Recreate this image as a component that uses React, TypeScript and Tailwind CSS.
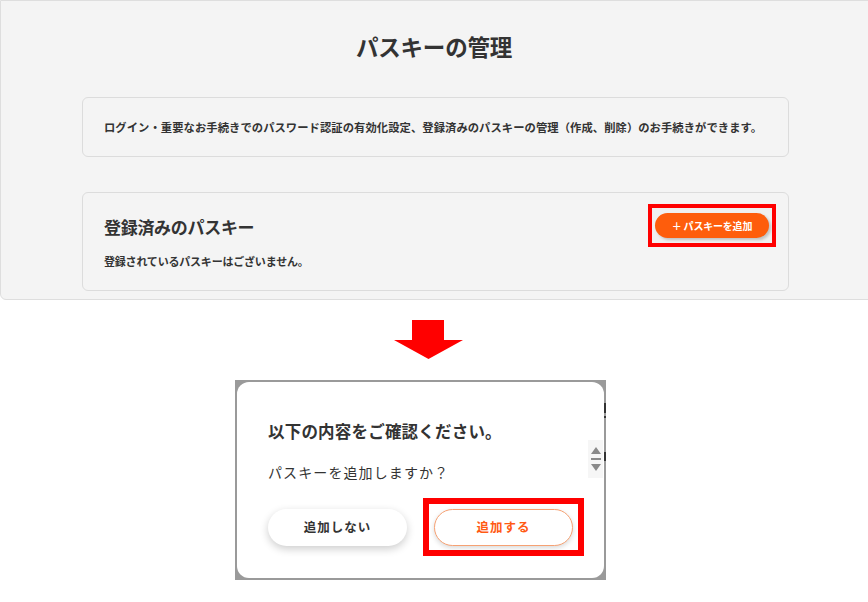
import React from "react";

const jp = { fontFamily: '"Noto Sans CJK JP", "Noto Sans", sans-serif' };

export default function App() {
  return (
    <div className="w-[868px] h-[602px] bg-white overflow-hidden text-[#333]" style={jp}>
      {/* Top panel */}
      <div className="w-[880px] h-[300px] bg-[#f4f4f4] border border-[#dedede] rounded-bl-[6px] flex flex-col">
        <h1 className="mt-[29px] ml-[-12px] text-center text-[22.5px] leading-[32px] font-bold tracking-[-0.2px]">
          パスキーの管理
        </h1>
        <div className="mt-[35px] ml-[81px] w-[707px] h-[60px] border border-[#dcdcdc] rounded-[6px] flex items-center pl-[21px]">
          <p className="text-[11.3px] leading-[16px] font-bold tracking-[0.07px] whitespace-nowrap">
            ログイン・重要なお手続きでのパスワード認証の有効化設定、登録済みのパスキーの管理（作成、削除）のお手続きができます。
          </p>
        </div>
        <div className="mt-[35px] ml-[81px] w-[707px] h-[99px] border border-[#dcdcdc] rounded-[6px] flex justify-between pl-[21px] pr-[12px]">
          <div className="flex flex-col">
            <h2 className="mt-[22px] text-[17px] leading-[24px] font-bold tracking-[-0.3px]">登録済みのパスキー</h2>
            <p className="mt-[14px] text-[11px] leading-[16px] font-bold tracking-[-0.2px]">
              登録されているパスキーはございません。
            </p>
          </div>
          <div className="mt-[11px] w-[128px] h-[43px] border-[4px] border-[#ff0000] bg-[#f0f0f0] flex items-center justify-center">
            <button className="w-[114px] h-[25px] rounded-full bg-[#fe5d0c] text-white text-[10px] font-bold leading-none shadow-[2px_2px_3px_rgba(0,0,0,0.2)] tracking-[-0.2px]">
              ＋ パスキーを追加
            </button>
          </div>
        </div>
      </div>

      {/* Arrow */}
      <svg className="mt-[20px] ml-[394px] block" width="69" height="39" viewBox="0 0 69 39">
        <polygon points="18,0 50,0 50,20 69,20 34.5,39 0,20 18,20" fill="#ff0000" />
      </svg>

      {/* Modal screenshot */}
      <div className="relative mt-[21px] ml-[235px] w-[371px] h-[200px] bg-[#9a9a9a] p-[2px]">
        <div className="relative w-full h-full bg-white rounded-[12px] flex flex-col pl-[31px]">
          <h3 className="mt-[37px] text-[16.5px] leading-[24px] font-bold tracking-[0.2px]">
            以下の内容をご確認ください。
          </h3>
          <p className="mt-[19px] text-[14px] leading-[20px] tracking-[1.1px] text-[#333]">
            パスキーを追加しますか？
          </p>
          <div className="mt-[16px] flex items-center gap-[16px]">
            <button className="w-[139px] h-[37px] rounded-full bg-white text-[12.5px] font-bold tracking-[1px] text-[#333] shadow-[0_3px_8px_rgba(0,0,0,0.2)]">
              追加しない
            </button>
            <div className="w-[161px] h-[58px] border-[6px] border-[#ff0000] flex items-center justify-center">
              <button className="w-[139px] h-[37px] rounded-full bg-white border border-[#f6a173] text-[12.5px] font-bold tracking-[1px] text-[#ff5a14] shadow-[0_2px_5px_rgba(0,0,0,0.15)]">
                追加する
              </button>
            </div>
          </div>
          {/* scroll indicator */}
          <div className="absolute right-[1px] top-[58px] w-[15px] h-[38px] bg-[#f6f6f6] flex flex-col items-center justify-center gap-[4px]">
            <svg width="10" height="7" viewBox="0 0 10 7">
              <polygon points="5,0 10,7 0,7" fill="#8a8a8a" />
            </svg>
            <div className="w-[10px] h-[2px] bg-[#8a8a8a]" />
            <svg width="10" height="7" viewBox="0 0 10 7">
              <polygon points="0,0 10,0 5,7" fill="#8a8a8a" />
            </svg>
          </div>
        </div>
        {/* underlying content peeking at right edge */}
        <div className="absolute right-0 top-[23px] w-[2px] h-[10px] bg-[#333]" />
        <div className="absolute right-0 top-[36px] w-[2px] h-[2px] bg-[#333]" />
        <div className="absolute right-0 top-[72px] w-[2px] h-[9px] bg-[#333]" />
      </div>
    </div>
  );
}
